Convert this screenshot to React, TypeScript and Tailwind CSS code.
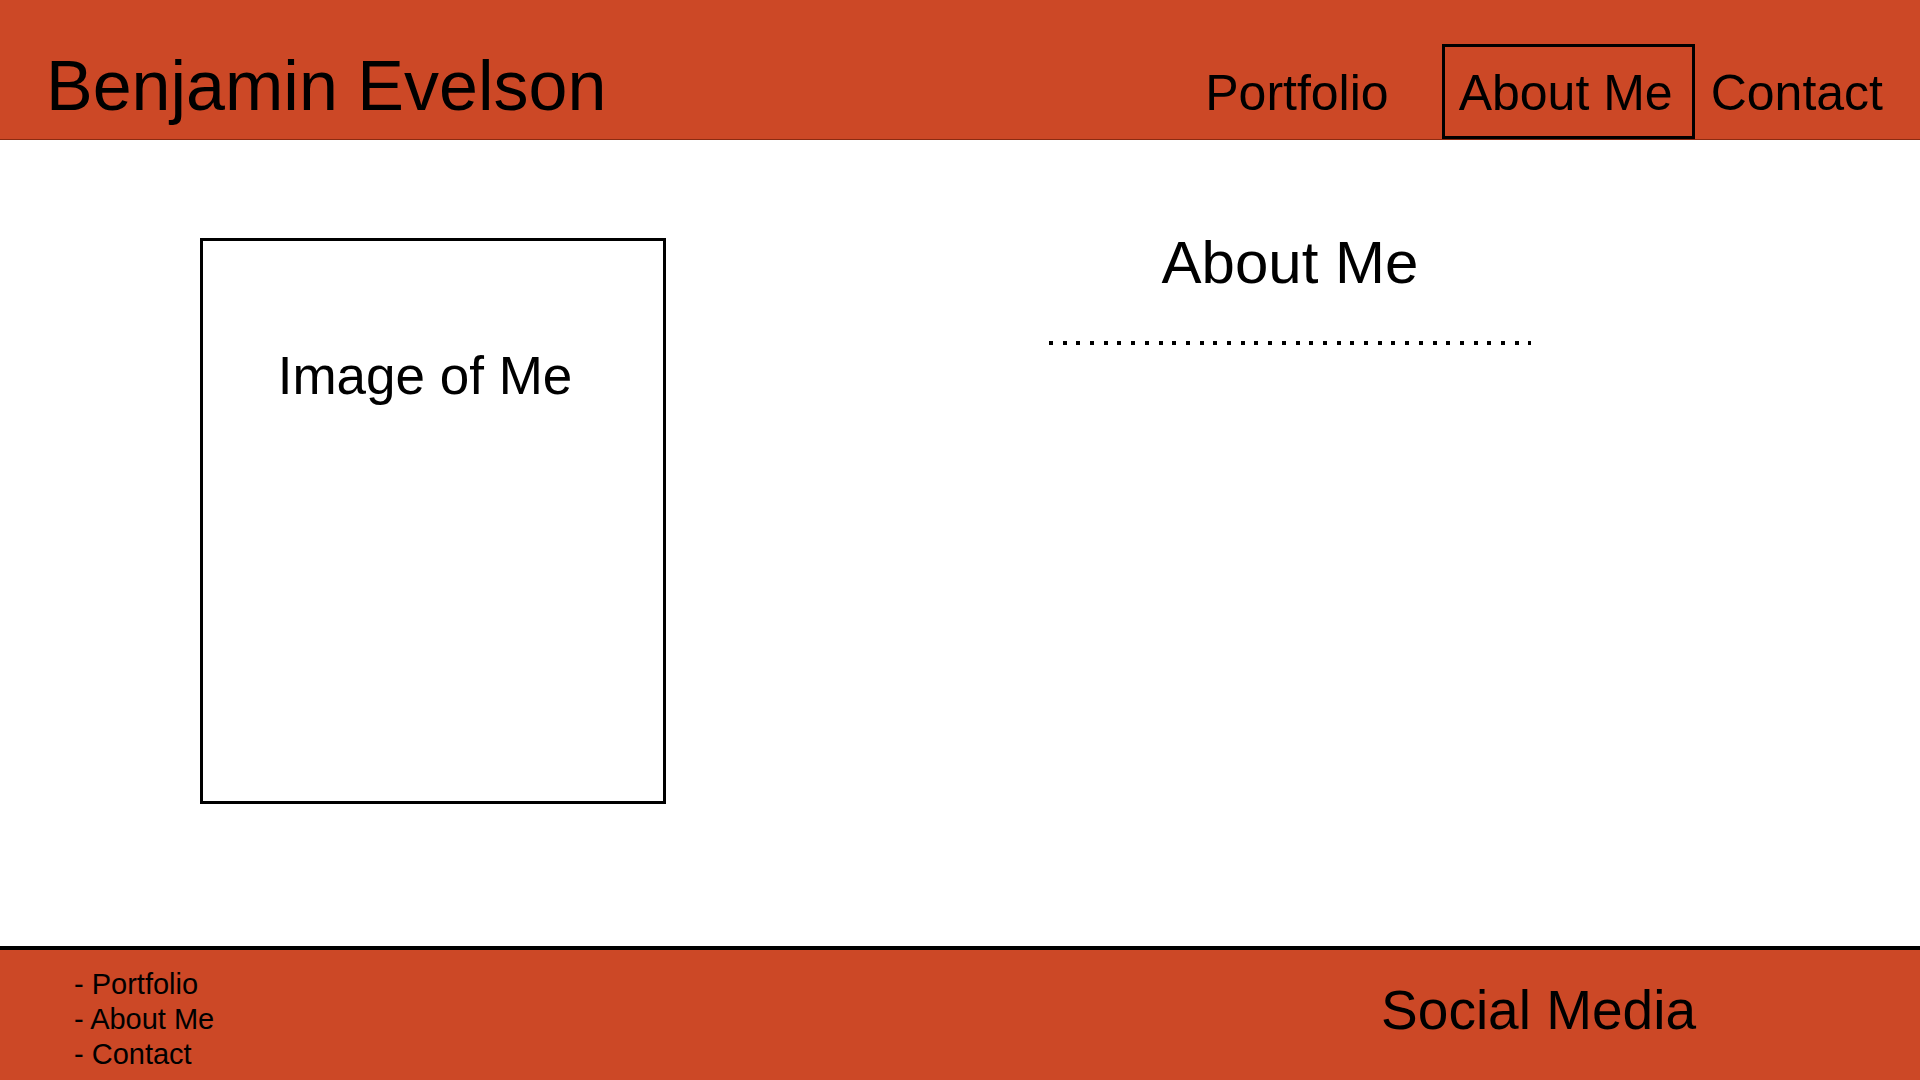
import React from 'react';

const navLinks = ['Portfolio', 'About Me', 'Contact'];

const App: React.FC = () => {
  return (
    <div className="w-[1920px] h-[1080px] flex flex-col bg-white text-black font-['Liberation_Sans',Arial,sans-serif] overflow-hidden">
      {/* header */}
      <header className="h-[140px] shrink-0 flex bg-[#cc4826] border-b border-[#8a2b12]">
        <h1 className="pl-[46px] pt-[51px] text-[70px] leading-none font-normal">Benjamin Evelson</h1>
        <nav className="ml-auto flex items-end pr-[37px]">
          <a className="text-[50px] leading-none pb-[21px] mr-[53px]">Portfolio</a>
          <a className="h-[95px] border-[3px] border-black pl-[14px] pr-[19px] pt-[21px] text-[50px] leading-none">About Me</a>
          <a className="text-[50px] leading-none pb-[21px] ml-[16px]">Contact</a>
        </nav>
      </header>

      {/* main */}
      <main className="flex-1 flex pl-[200px] pt-[93px]">
        <div className="mt-[5px] w-[466px] h-[566px] border-[3px] border-black flex justify-center pr-[16px] pt-[108px]">
          <p className="text-[53px] leading-none h-[53px]">Image of Me</p>
        </div>
        <section className="ml-[381px] w-[486px] flex flex-col items-center">
          <h2 className="text-[60px] leading-none font-normal">About Me</h2>
          <div className="mt-[48px] w-[482px] h-[4px] bg-[repeating-linear-gradient(to_right,#000_0px,#000_4px,transparent_4px,transparent_13.7px)]" />
        </section>
      </main>

      {/* footer */}
      <footer className="h-[134px] shrink-0 flex bg-[#cc4826] border-t-4 border-black">
        <ul className="pl-[74px] pt-[17px] text-[29px] leading-[35px]">
          {navLinks.map((l) => (
            <li key={l}>- {l}</li>
          ))}
        </ul>
        <p className="ml-auto mr-[224px] mt-[33px] h-[55px] text-[55px] leading-none">Social Media</p>
      </footer>
    </div>
  );
};

export default App;
